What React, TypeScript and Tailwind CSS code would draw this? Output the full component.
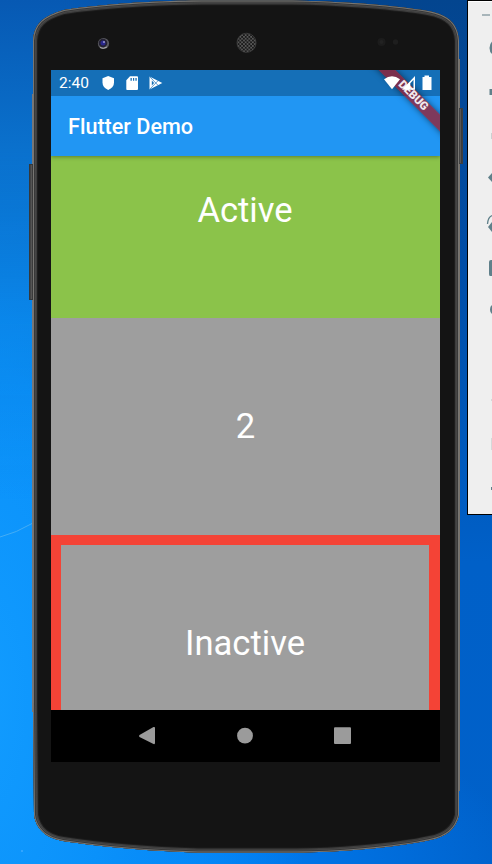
import type { ReactNode } from "react";

const OUTLINE =
  "M33 160V41C34 24 43 16 64 10C115 2 180 0.5 202 0.5H292C340 1 400 6 428 11C449 15 458 24 459 41V815C456 829 446 837 430 840C395 848 330 852.5 297 852.5H198C145 851 95 846 63 841C45 838 36 828 34 815L33 700Z";

function PhoneBody() {
  return (
    <svg className="absolute left-0 top-0" width="492" height="864" viewBox="0 0 492 864">
      <defs>
        <pattern id="mesh" width="3.6" height="3.6" patternUnits="userSpaceOnUse">
          <rect width="3.6" height="3.6" fill="#5c5c5c" />
          <circle cx="0.9" cy="0.9" r="1.1" fill="#171717" />
          <circle cx="2.7" cy="2.7" r="1.1" fill="#171717" />
        </pattern>
        <linearGradient id="key" x1="0" y1="0" x2="1" y2="0">
          <stop offset="0" stopColor="#333" />
          <stop offset="0.5" stopColor="#555" />
          <stop offset="1" stopColor="#202020" />
        </linearGradient>
        <clipPath id="body"><path d={OUTLINE} /></clipPath>
      </defs>
      <path d="M0 537Q16 533 33 523" fill="none" stroke="#45adf5" strokeWidth="1" />
      <circle cx="22" cy="851" r="1" fill="#3faaff" />
      <path d="M32.5 94V712" stroke="#77777a" />
      <path d="M459.5 59V791" stroke="#77716a" />
      <rect x="29.5" y="164.500" width="4" height="135" fill="url(#key)" stroke="#35383a" />
      <rect x="458.500" y="108.500" width="4" height="55" fill="url(#key)" stroke="#3d3d3d" />
      <g clipPath="url(#body)">
        <path d={OUTLINE} fill="#141414" stroke="#1d1d1d" strokeWidth="10" />
        <path d={OUTLINE} fill="none" stroke="#3d3d3d" strokeWidth="8" />
        <path d={OUTLINE} fill="none" stroke="#515151" strokeWidth="5" />
        <path d={OUTLINE} fill="none" stroke="#383838" strokeWidth="4" />
        <path d={OUTLINE} fill="none" stroke="#777673" strokeWidth="2" />
      </g>
      <circle cx="103.500" cy="43.500" r="5.600" fill="#5b5b61" />
      <circle cx="103" cy="43" r="4.300" fill="#242233" />
      <circle cx="103" cy="43" r="2.500" fill="#29278a" />
      <circle cx="104" cy="42" r="1" fill="#9898d0" />
      <path d="M100 47.500Q103 49.500 107 47" stroke="#aaa" fill="none" />
      <circle cx="246.500" cy="42.800" r="9.600" fill="url(#mesh)" stroke="#454545" strokeWidth="0.6" />
      <circle cx="381.500" cy="42" r="4" fill="#1c1c1c" />
      <circle cx="381.500" cy="42" r="2" fill="#222" />
      <circle cx="395.500" cy="42" r="2.700" fill="#1e1e1e" />
    </svg>
  );
}

function StatusBar() {
  return (
    <div className="relative z-10 flex h-[26px] shrink-0 items-center pl-2 text-white">
      <span className="w-[43px] pt-[2px] text-[15.500px] leading-none">2:40</span>
      <svg width="64" height="16" viewBox="0 0 64 16" fill="currentColor">
        <path d="M6.200 1L12 3.300V7.500Q12 12.500 6.200 15Q.5 12.500.5 7.500V3.300Z" />
        <path fillRule="evenodd" d="M28 1.300H35Q36 1.300 36 2.300V14Q36 15 35 15H25Q24.300 15 24.300 14V5.200ZM28.500 3V5.800H29.800V3ZM31 3V5.800H32.200V3ZM33.400 3V5.800H34.700V3Z" />
        <path d="M47.500 1.500L60.300 8L47.500 14.500Z" />
        <path d="M47.500 1.500L56.200 10.500M47.500 14.500L56.200 5.500" stroke="#156fb7" strokeWidth="0.7" />
        <path d="M49.800 5.500L52.100 8L49.800 10.500Z" fill="#156fb7" />
      </svg>
      <svg className="ml-auto mr-[7px]" width="50" height="16" viewBox="0 0 50 16" fill="currentColor">
        <path d="M1 4.300Q9 -2 17 4.300L9 14.200Z" />
        <path fillRule="evenodd" d="M19 14.700L32 1V14.700ZM27.300 8.200V13.200H30.500V4.700Z" />
        <path d="M41.500 2V.6H46V2H48.500V15H39.500V2Z" />
      </svg>
    </div>
  );
}

function DebugBanner() {
  return (
    <div className="absolute right-0 top-0 h-[80px] w-[80px] overflow-hidden">
      <div className="absolute left-[-17px] top-[20px] flex h-[12px] w-[140px] rotate-45 items-center justify-center bg-[#9d1a2bc0] text-[11.500px] font-black leading-none text-white/90 shadow-[0_0_6px_rgba(0,0,0,0.5)]">
        DEBUG
      </div>
    </div>
  );
}

function Label({ children }: { children: ReactNode }) {
  return <span className="text-[34.600px] leading-none text-white">{children}</span>;
}

function EmulatorPanel() {
  return (
    <aside className="relative ml-auto h-[515px] w-[25px] overflow-hidden border-b border-l border-t border-black bg-[#efefef] shadow-[inset_0_1px_0_#fff]">
      <svg width="24" height="513" viewBox="468 1 24 513" fill="#60808a">
        <path d="M482 14H490V16H482Z" fill="#a8b5ba" />
        <path d="M492 41.500Q489.500 44 489.500 48T492 54Z" />
        <path d="M489.500 89H492V95H489.500Z" />
        <path d="M491 133H492V139H491Z" fill="#ccd0d1" />
        <path d="M488 177.500L492 173V182Z" />
        <path d="M487.500 224Q488 217 492 215.500" fill="none" stroke="#60808a" strokeWidth="1.300" />
        <path d="M488 227L492 222V232Z" />
        <path d="M489 262Q489 260 491 260H492V276H490Q489 276 489 274Z" />
        <path d="M492 305Q490 306 490 309.500T492 314Z" />
        <path d="M491 399H492V401H491ZM491 438H492V450H491Z" fill="#d6d8d9" />
        <path d="M491 487H492V490H491Z" />
      </svg>
    </aside>
  );
}

export default function App() {
  return (
    <main className="relative flex h-[864px] w-[492px] overflow-hidden bg-[radial-gradient(ellipse_330px_830px_at_-20px_700px,#129cff_0%,#0a91fa_40%,#0a7ce400_100%),radial-gradient(ellipse_340px_160px_at_180px_864px,#0080f8_0%,#007cf000_100%),linear-gradient(180deg,#03458f_0%,#004da6_30%,#0060c8_65%,#0061ca_100%)] font-['Roboto',sans-serif]">
      <div className="absolute left-0 top-0 h-[500px] w-[240px] bg-[linear-gradient(180deg,#0759b3_0%,#0a71cd_30%,#0b86e8aa_65%,#0b8cf000_100%)] [mask-image:linear-gradient(90deg,#000_25%,transparent_100%)]" />
      <PhoneBody />
      <section className="relative ml-[51px] mt-[70px] flex h-[692px] w-[389px] shrink-0 flex-col overflow-hidden bg-black">
        <div className="relative z-10 flex h-[86px] shrink-0 flex-col bg-[#2196f3] shadow-[0_1px_4px_rgba(0,0,0,0.35)]">
          <div className="absolute inset-x-0 top-0 h-[26px] bg-[#156fb7]" />
          <DebugBanner />
          <StatusBar />
          <header className="flex flex-1 items-center pl-[17px] pt-[2px]">
            <h1 className="text-[21.600px] font-medium leading-none text-white">Flutter Demo</h1>
          </header>
        </div>
        <div className="flex h-[554px] shrink-0 flex-col overflow-hidden">
          <div className="flex h-[162px] shrink-0 justify-center bg-[#8bc34a] pr-px pt-[37px]"><Label>Active</Label></div>
          <div className="flex h-[217px] shrink-0 items-center justify-center bg-[#9e9e9e]"><Label>2</Label></div>
          <div className="flex h-[216px] shrink-0 items-center justify-center border-[10px] border-r-[11px] border-[#f44336] bg-[#9e9e9e]"><Label>Inactive</Label></div>
        </div>
        <nav className="flex h-[52px] shrink-0 items-center bg-black">
          <svg width="389" height="52" viewBox="0 0 389 52" fill="#9b9b9b">
            <path d="M88.500 25L102.500 17Q104 16.500 104 18V33Q104 34.500 102.500 34L88.500 27Q87.500 26 88.500 25Z" />
            <circle cx="194" cy="25.700" r="7.900" />
            <rect x="283" y="17.300" width="17" height="16.700" rx="1" />
          </svg>
        </nav>
      </section>
      <EmulatorPanel />
    </main>
  );
}
